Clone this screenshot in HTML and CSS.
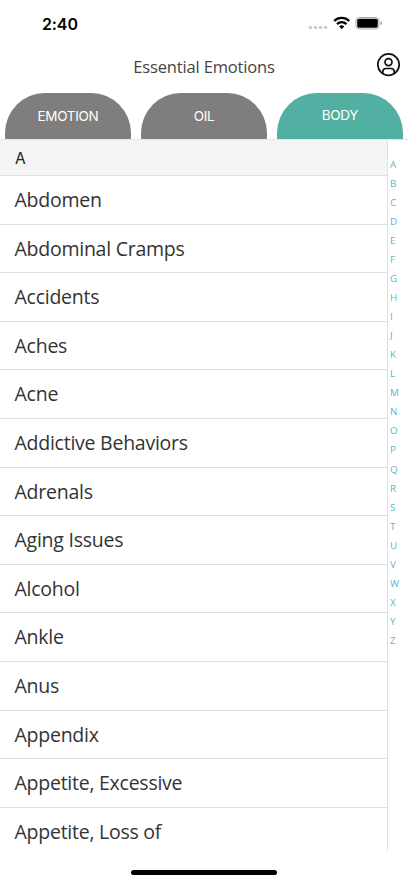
FILE: index.html
```html
<!DOCTYPE html>
<html lang="en"><head><meta charset="utf-8"><title>Essential Emotions</title><link rel="stylesheet" href="styles.css"></head>
<body>
<div class="status"><span class="time">2:40</span>
<svg class="sys" width="76" height="18" viewBox="0 0 76 18"><g fill="#ccc"><circle cx="3.500" cy="13.500" r="1.800"/><circle cx="8.500" cy="13.500" r="1.800"/><circle cx="13.500" cy="13.500" r="1.800"/><circle cx="18.500" cy="13.500" r="1.800"/></g>
<g fill="none" stroke="#000" stroke-width="2.300"><path d="M27.200 7a10.500 10.500 0 0 1 15 0M30 10.100a6.600 6.600 0 0 1 9.400 0"/></g><path d="M32.100 12.400a3.800 3.800 0 0 1 5.200 0L34.700 15z"/>
<rect x="49" y="3.500" width="23" height="11.500" rx="3.400" fill="none" stroke="#aaa"/><rect x="50.200" y="4.800" width="20.600" height="8.900" rx="1.800"/><path d="M73.500 7.300v4q1.500-.6 1.500-2t-1.500-2" fill="#999"/></svg></div>
<header class="header"><h1>Essential Emotions</h1><svg class="user" width="24" height="24" viewBox="0 0 24 24" fill="none" stroke="#111" stroke-width="1.700"><circle cx="11.500" cy="11.600" r="10.700"/><circle cx="11.500" cy="9.100" r="3.500"/><path d="M5.800 20v-1.200c0-2 1.200-3.300 3.200-3.300h5c2 0 3.200 1.300 3.200 3.300V20"/></svg></header>
<nav class="tabs"><a>EMOTION</a><a>OIL</a><a class="active">BODY</a></nav>
<main class="content"><section class="list"><h2>A</h2>
<ul><li>Abdomen</li><li>Abdominal Cramps</li><li>Accidents</li><li>Aches</li><li>Acne</li><li>Addictive Behaviors</li><li>Adrenals</li><li>Aging Issues</li><li>Alcohol</li><li>Ankle</li><li>Anus</li><li>Appendix</li><li>Appetite, Excessive</li><li>Appetite, Loss of</li></ul></section>
<aside class="index"><span>A</span><span>B</span><span>C</span><span>D</span><span>E</span><span>F</span><span>G</span><span>H</span><span>I</span><span>J</span><span>K</span><span>L</span><span>M</span><span>N</span><span>O</span><span>P</span><span>Q</span><span>R</span><span>S</span><span>T</span><span>U</span><span>V</span><span>W</span><span>X</span><span>Y</span><span>Z</span></aside></main>
<footer class="home"><div></div></footer>
</body></html>
```
FILE: styles.css
```css
* { box-sizing: border-box; }
body { margin: 0; width: 408px; height: 883px; overflow: hidden; background: #fff; color: #333; font-family: "Open Sans", sans-serif; display: flex; flex-direction: column; }
.status { height: 46px; flex: none; display: flex; justify-content: space-between; padding: 14px 25px 0 42px; }
.time { font: 600 16px/20px Inter, sans-serif; letter-spacing: -.1px; color: #000; }
.sys { display: block; }
.header { height: 47px; flex: none; display: grid; grid-template-columns: 24px 1fr 24px; padding: 7px 7px 0 8px; }
h1 { grid-column: 2; margin: 3px 0 0 -1px; font-size: 16.500px; line-height: 22px; letter-spacing: -.15px; font-weight: 400; text-align: center; color: #444; }
.tabs { height: 47px; flex: none; display: flex; gap: 10px; padding: 0 5px; border-bottom: 1px solid #e4e4e4; }
.tabs a { flex: 1; background: #807e7c; border-radius: 40px 40px 0 0; color: #fff; text-align: center; font: 400 13.500px/46px Inter, sans-serif; letter-spacing: -.3px; }
.tabs .active { background: #52b0a2; line-height: 44px; }
.content { height: 711px; flex: none; display: flex; overflow: hidden; }
.list { width: 388px; border-right: 1px solid #e0e0e0; }
h2 { margin: 0; height: 36px; padding-left: 15px; background: #f4f4f4; border-bottom: 1px solid #e0e0e0; font: 400 15.500px/37px Inter, sans-serif; color: #222; }
ul { list-style: none; margin: 0; padding: 0; }
li { height: 48.600px; padding-left: 14.500px; border-bottom: 1px solid #e0e0e0; font-size: 19.500px; letter-spacing: -.25px; line-height: 48.600px; }
.index { display: flex; flex-direction: column; padding: 15px 0 0 2px; color: #5db5d0; font-size: 9.800px; }
.index span { height: 19.040px; line-height: 19px; }
.home { flex: 1; display: flex; justify-content: center; padding-top: 19px; }
.home div { width: 146px; height: 5px; border-radius: 3px; background: #000; }
```
